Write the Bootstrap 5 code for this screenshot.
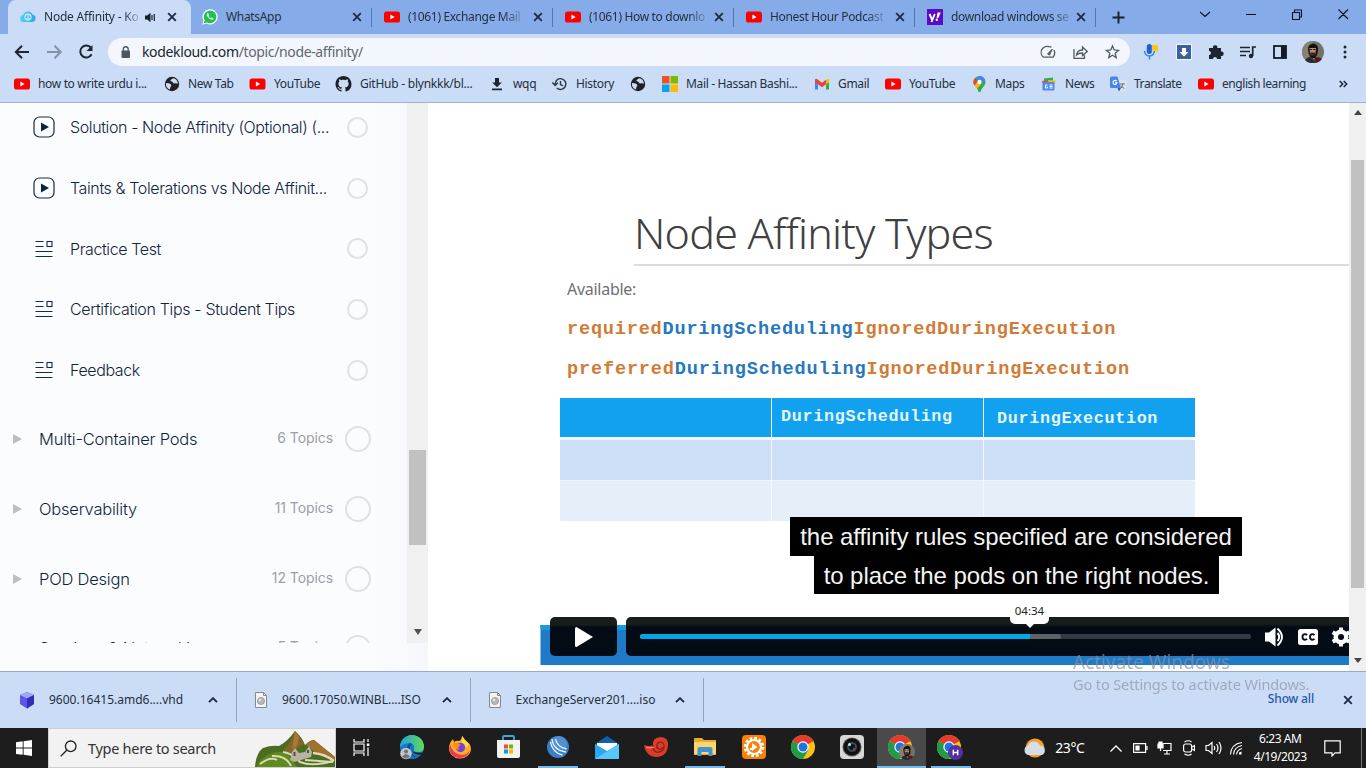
<!DOCTYPE html>
<html lang="en">
<head>
<meta charset="utf-8">
<title>Node Affinity - KodeKloud</title>
<link href="https://cdn.jsdelivr.net/npm/bootstrap@5.3.0/dist/css/bootstrap.min.css" rel="stylesheet">
<style>
body{width:1366px;height:768px;overflow:hidden;font-family:"Noto Sans",sans-serif;font-size:12px;line-height:16px;color:#23303f;background:#fff}
svg{display:block;flex:none}
.ui{white-space:nowrap}
/* browser tabs */
.tabstrip{height:34px;background:#85ace8;letter-spacing:-.33px}
.tabitem{width:181px;height:34px;padding:0 10px 0 12px;position:relative}
.tabitem+.tabitem:after{content:"";position:absolute;right:0;top:8px;width:1px;height:19px;background:#5676a8}
.tabitem.current{width:183px;margin-left:8px;background:#cbdcf6;border-radius:8px 8px 0 0;letter-spacing:-.22px}
.tabtext{overflow:hidden;white-space:nowrap;-webkit-mask-image:linear-gradient(90deg,#000 85%,rgba(0,0,0,.25))}
/* toolbar */
.toolbar{height:36px;background:#cbdcf6}
.navbtns{width:108px;padding-left:14px}
.omnibox{width:1022px;height:28px;border-radius:14px;background:#f3f7fd;font-size:14px;padding:0 9px 0 13px;color:#5f6670;letter-spacing:-.36px}
.omnibox b{font-weight:400;color:#20262e}
.exts{display:grid;grid-template-columns:34px 32px 32px 32px 32px 34px 30px;justify-items:center;margin-left:4px}
.bookmarks{height:33px;background:#cbdcf6;border-bottom:1px solid #9fb2d3;display:grid;grid-template-columns:150px 85px 86px 154px 62px 78px 33px 152px 71px 87px 69px 69px 88px 141px 20px;padding:0 0 5px 14px;align-items:center;letter-spacing:-.34px}
.bookmarks .tight{letter-spacing:-.24px}
/* course sidebar */
.pagearea{height:568px}
.sidebar{width:428px;background:linear-gradient(90deg,#fbfcfe 375px,#f5f7fb);font-family:Inter,sans-serif;color:#16294a}
.outline{width:407px;height:540px;overflow:hidden}
.lesson{height:60.7px;padding-left:33px;font-size:16px;font-weight:300;color:#122340;letter-spacing:-.39px}
.lesson:first-child{margin-top:-6px}
.lesson .name{width:277px;margin-left:15px}
.ring{width:21px;height:21px;border:2px solid #e0e1e3;border-radius:50%;flex:none}
.ring.big{width:26px;height:26px;margin-left:12px}
.chapter{height:69.7px;padding-left:13px;font-size:16.5px;font-weight:300;width:371px;letter-spacing:-.22px;color:#0e1f3c}
.chapters{margin-top:4px}
.chapter .name{margin-left:17px}
.chapter .topics{font-size:14px;font-weight:400;letter-spacing:-.08px;color:#9c9fa5;margin-top:-2px}
.scroller{background:#f0f0f0}
.side-scroll{width:21px;height:540px}
.side-scroll i{display:block;width:17px;height:95px;background:#c1c1c1;margin:347px auto 0}
.page-scroll{width:17px;height:568px}
.page-scroll i{display:block;width:13px;height:428px;background:#c1c1c1;margin:45px auto 0}
/* slide */
.slide{width:921px;padding-left:112px;color:#404040}
.slide h1{font-weight:300;font-size:43px;line-height:50px;letter-spacing:-.77px;margin:105px 0 0 94px;padding-bottom:6px;border-bottom:2px solid #dcdcdc;height:58px;white-space:nowrap;color:#404040}
.avail{margin:13px 0 0 27px;height:20px;font-size:16px;line-height:20px;letter-spacing:-.28px;color:#707070}
.code{font-family:"Liberation Mono",monospace;font-weight:700;font-size:18.6px;line-height:24px;letter-spacing:.78px;margin:19px 0 0 27px;white-space:nowrap;color:#d07c37}
.code+.code{margin-top:16px;letter-spacing:.82px}
.code span{color:#2878bd}
.grid3{display:grid;grid-template-columns:211px 211px 211px;column-gap:1px;width:635px;margin:16px 0 0 20px;background:#f4f8fd}
.grid3 div{height:40px;background:#cddff6}
.grid3 .hd{height:42px;background:#11a1ee;color:#e5f6ff;font:700 16.8px/38px "Liberation Mono",monospace;letter-spacing:.67px;border-bottom:3px solid #f2f8fe;padding-left:9px;white-space:nowrap}
.grid3 .hd.last{padding-left:13px;line-height:41px}
.grid3 .lt{height:41px;border-top:1px solid #eef5fc;background:#e5effa}
.captions{position:absolute;left:0;top:414px;width:921px;padding-left:255px;font:24px/39px "Liberation Sans",sans-serif;letter-spacing:-.07px;color:#f4f4f4}
.captions div{background:#000;height:38.5px;width:452px;white-space:nowrap;text-align:center}
.captions div+div{width:405px}
.player{position:absolute;left:112px;top:522px;width:809px;height:40px;background:#1f7ac8;border-top:5px solid #1b99df;border-left:1px solid #8cb9e0}
.controls{position:absolute;left:122px;top:514px;width:799px}
.playbtn{width:67px;height:39px;border-radius:5px;background:linear-gradient(#181c1b 8px,#030c15 10px)}
.bar{width:723px;height:39px;border-radius:5px 0 0 5px;background:linear-gradient(#181c1b 7px,#030c15 10px);padding-left:14px;overflow:hidden}
.track{width:611px;height:5px;border-radius:3px;background:#353b44}
.loaded{width:421px;height:5px;border-radius:3px;background:#5d6468}
.played{width:390px;height:5px;border-radius:3px 0 0 3px;background:#00a7e5}
.tip{position:absolute;left:582px;top:498px;width:39px;height:23px;background:#fff;border-radius:5px;text-align:center;color:#222;line-height:20px;font-size:11.5px}
.tip:after{content:"";position:absolute;left:16px;top:23px;border:4px solid transparent;border-top-color:#fff}
.watermark{position:absolute;left:1073px;top:649px;color:#8d9299;opacity:.68;white-space:nowrap}
.watermark .w1{font-size:19px;line-height:26px}
.watermark .w2{font-size:14.500px;line-height:18px;letter-spacing:-.11px}
/* downloads */
.downloads{height:57px;background:#cbdcf6;border-top:1px solid #9ba8bd}
.dl{width:233.500px;height:44px;padding:0 18px;border-right:1px solid #91a4c2}
.dl:first-child{width:237px}
.dl .fname{width:152px;margin-left:15px}
.dl:first-child .fname{margin-left:13px}
.showall{color:#2456b0;font-weight:500;letter-spacing:-.15px;margin-bottom:2px}
/* taskbar */
.taskbar{height:40px;background:#1d1d1d;color:#fff}
.startbtn{width:48px}
.searchbox{width:288px;background:#f2f2f2;border:1px solid #cfcfcf;font-size:14.500px;letter-spacing:-.29px;color:#333;padding-left:11px}
.apps{display:grid;grid-template-columns:repeat(13,49.100px);height:40px;margin-left:1px}
.app{display:flex;align-items:center;justify-content:center;height:40px;border-bottom:2px solid transparent}
.app.run{width:40px;margin:0 4.500px;border-color:#76b9ed}
.app.focus{width:49px;margin:0;background:#4a4a4a;border-color:#76b9ed}
.weather{margin-left:48px;width:81px;font-size:14px;letter-spacing:-.4px}
.tray{display:grid;grid-template-columns:repeat(5,24.200px) 22px;width:143px;justify-items:center}
.clock{width:66px;text-align:center;line-height:18px;font-size:12px;letter-spacing:-.45px}
.endline{width:1px;height:40px;background:#777}
</style>
</head>
<body class="d-flex flex-column position-relative">
<svg width="0" height="0" class="position-absolute">
<defs>
<symbol id="yt" viewBox="0 0 16 16"><rect y="2.5" width="16" height="11" rx="2.6" fill="#f00"/><path d="M6.4 5.6v4.8l4.2-2.4z" fill="#fff"/></symbol>
<symbol id="x" viewBox="0 0 10 10"><path d="M1.200 1.200l7.600 7.600M8.800 1.200L1.200 8.800" stroke="#1d2b3e" stroke-width="1.800"/></symbol>
<symbol id="globe" viewBox="0 0 16 16"><circle cx="8" cy="8" r="7.200" fill="#202124"/><path d="M2 7c3 .3 5 .6 5.300 2.200.2 1.300-1.300 1.400-1 2.800L5.600 13.500C3 12.500 1.500 10 2 7zM9 2.300c-1.300 1.300-2.800 1-2.500 2.500.3 1 2 .6 2.500 1.700.5 1.300 1.500 1 2.500.8 1.100-.2 1.600.7 2.300.7C14 5 12 2.600 9 2.300z" fill="#cbdcf6"/></symbol>
<symbol id="play" viewBox="0 0 22 22"><rect x="1" y="1" width="20" height="20" rx="5.500" fill="none" stroke="#14284a" stroke-width="1.200"/><path d="M8 6.500v9l8-4.500z" fill="#0b2140"/></symbol>
<symbol id="list" viewBox="0 0 22 22"><path d="M2.500 3.500h8M2.500 8.500h8M2.500 13.500h17M2.500 18.500h17" stroke="#14284a" stroke-width="1.100"/><rect x="14" y="3.500" width="5" height="5" fill="none" stroke="#14284a" stroke-width="1.100"/></symbol>
<symbol id="up" viewBox="0 0 10 6"><path d="M1 5.200l4-4 4 4" fill="none" stroke="#1f2a3a" stroke-width="1.900"/></symbol>
<symbol id="disc" viewBox="0 0 12 16"><path d="M.5.500h8l3 3v12h-11z" fill="#f4f4f4" stroke="#85888d"/><path d="M8.500.5v3h3" fill="none" stroke="#85888d"/><circle cx="6" cy="9" r="3.600" fill="#b5b7ba" stroke="#909397" stroke-width=".7"/><circle cx="5" cy="8" r="1.300" fill="#e4e4e4"/></symbol>
<symbol id="chrome" viewBox="0 0 24 24"><circle cx="12" cy="12" r="12" fill="#fbc116"/><path d="M12 12L1.600 6A12 12 0 0 1 22.400 6z" fill="#e33b2e"/><path d="M12 12L1.600 6A12 12 0 0 0 12 24l5.200-9z" fill="#229a4c"/><path d="M12 6.500h10.700L22.400 6H12z" fill="#e33b2e"/><circle cx="12" cy="12" r="5.700" fill="#fff"/><circle cx="12" cy="12" r="4.500" fill="#1f74e4"/></symbol>
<symbol id="man" viewBox="0 0 22 22"><circle cx="11" cy="11" r="11" fill="#6f7467"/><path d="M0 11a11 11 0 0 0 11 11V0A11 11 0 0 0 0 11z" fill="#858272"/><path d="M6 7q1-4 5-4.500 4.500.5 5 4.500l-.5 6-2.500 4H8.500L6.500 12z" fill="#17100f"/><path d="M7.500 7h6.500l-.5 6-2.500 2-3-2z" fill="#b98a72"/><path d="M8 11.500h5.500l-1 3.500h-3z" fill="#3a2621"/><path d="M3 19q3-4 7-3l3 5.800Q6 23 3 19z" fill="#292b38"/><path d="M12 21.900l1-6q5 0 7 2-3 3.800-8 4z" fill="#551827"/><path d="M7.500 8.500h2.500M11 8.500h2.500" stroke="#302422"/></symbol>
</defs>
</svg>

<!-- tabs -->
<header class="tabstrip d-flex">
 <div class="tabitem current d-flex align-items-center">
  <svg width="16" height="16" viewBox="0 0 16 16"><defs><linearGradient id="kk"><stop stop-color="#58d0f2"/><stop offset="1" stop-color="#36a3e6"/></linearGradient></defs><path d="M4 13a3.500 3.500 0 0 1-.8-7A5 5 0 0 1 12.500 5.500 3.800 3.800 0 0 1 12 13z" fill="url(#kk)"/><circle cx="8" cy="8" r="3.200" fill="#8fe3f2" stroke="#d8f5fb"/><path d="M7 6.700L5.800 8 7 9.300M9 6.700L10.200 8 9 9.300" fill="none" stroke="#3b9fd0"/></svg>
  <div class="tabtext ms-2">Node Affinity - Ko</div>
  <svg class="ms-auto" width="11" height="11" viewBox="0 0 11 11"><path d="M0 3.500h2.200L5.500.800v9.400L2.200 7.500H0z" fill="#16202e"/><path d="M7 3v5M9.300 2v7" stroke="#16202e" stroke-width="1.200"/></svg>
  <svg class="ms-1 me-1" width="17" height="10" viewBox="0 0 17 10"><use href="#x" x="7" width="10" height="10"/></svg>
 </div>
 <div class="tabitem d-flex align-items-center">
  <svg style="margin-left:-1px" width="16" height="16" viewBox="0 0 16 16"><path d="M.3 15.700l1.200-4A7.600 7.600 0 1 1 4.500 14.600z" fill="#fff"/><path d="M1.800 14.200l.9-3A6.300 6.300 0 1 1 5 13.400z" fill="#23c04f"/><path d="M5.500 4.300c-1.300 1-.7 2.700 1 4.500s3.700 2.700 4.800 1.300l.1-.8-1.700-.9-1 .9C7.500 8.700 6.800 8 6.400 7l.7-.8-.7-1.700z" fill="#fff"/></svg>
  <span class="ms-2 ui">WhatsApp</span><svg class="ms-auto" width="10" height="10"><use href="#x"/></svg>
 </div>
 <div class="tabitem d-flex align-items-center"><svg width="16" height="16"><use href="#yt"/></svg><div class="tabtext ms-2">(1061) Exchange Mail</div><svg class="ms-auto" width="10" height="10"><use href="#x"/></svg></div>
 <div class="tabitem d-flex align-items-center"><svg width="16" height="16"><use href="#yt"/></svg><div class="tabtext ms-2">(1061) How to downlo</div><svg class="ms-auto" width="10" height="10"><use href="#x"/></svg></div>
 <div class="tabitem d-flex align-items-center"><svg width="16" height="16"><use href="#yt"/></svg><div class="tabtext ms-2">Honest Hour Podcast</div><svg class="ms-auto" width="10" height="10"><use href="#x"/></svg></div>
 <div class="tabitem d-flex align-items-center"><svg width="16" height="16" viewBox="0 0 16 16"><rect width="16" height="16" fill="#5b0bc8"/><path d="M2.500 5l2.500 5.500M7.800 5l-3.300 8" stroke="#fff" stroke-width="1.900"/><path d="M10.500 3.500h3.200L11.300 9H9.600z" fill="#fff"/><circle cx="9.800" cy="10.800" r="1.200" fill="#fff"/></svg><div class="tabtext ms-2">download windows se</div><svg class="ms-auto" width="10" height="10"><use href="#x"/></svg></div>
 <svg class="align-self-center ms-3" width="13" height="13" viewBox="0 0 13 13"><path d="M6.500.5v12M.5 6.500h12" stroke="#16202e" stroke-width="1.900"/></svg>
 <svg class="ms-auto" width="166" height="28" viewBox="0 0 166 28" fill="none" stroke="#0c1420" stroke-width="1.100"><path d="M0 12l5 4.500 5-4.500M46 14.500h10M92.500 12.500h7v7h-7zM94.500 12.500v-2.500h7v7h-2M138.500 9.500l9.500 9.500M148 9.500L138.500 19"/></svg>
</header>

<!-- toolbar -->
<div class="toolbar d-flex align-items-center">
 <svg class="navbtns" width="108" height="20" viewBox="0 0 94 20" fill="none" stroke-width="2"><path d="M15 10H2M8 3.800L1.800 10 8 16.200" stroke="#1c2531"/><path d="M33 10h13.500M40.500 3.800l6.200 6.200-6.200 6.200" stroke="#8492a8"/><path d="M77 5.800a6 6 0 1 0 .6 6.500" stroke="#1c2531"/><path d="M78.500 3v6h-6z" fill="#1c2531"/></svg>
 <div class="omnibox d-flex align-items-center">
  <svg width="10" height="12" viewBox="0 0 10 12"><rect x=".5" y="4.500" width="8.500" height="7.500" rx="1" fill="#4d5661"/><path d="M2.300 5V3.200a2.400 2.400 0 0 1 4.900 0V5" fill="none" stroke="#4d5661" stroke-width="1.300"/></svg>
  <span class="ui" style="margin-left:11px"><b>kodekloud.com</b>/topic/node-affinity/</span>
  <svg class="ms-auto" width="82" height="16" viewBox="0 0 82 16" fill="none" stroke="#4f5965" stroke-width="1.300"><path d="M4.500 13.200A6 6 0 0 1 10 2.700q1.500 0 2.500.5M15 6q1.800 4-1 7.200H4.500"/><path d="M8.500 10l4.800-5-2.800 6.200z" fill="#4f5965" stroke-width="1"/><path d="M35 5v9.300h10.500v-3M37.500 11c.5-4 3-5 6-5V3l4.800 4.500-4.800 4V9c-3 0-4.500.5-6 2z"/><path d="M73.500 2l1.700 4 4.300.4-3.300 2.800 1 4.300-3.700-2.300-3.700 2.300 1-4.300-3.300-2.800 4.300-.4z"/></svg>
 </div>
 <div class="exts align-items-center">
  <svg width="16" height="18" viewBox="0 0 16 18"><path d="M8 2h7v7l-3-1.500H9z" fill="#fcc60b"/><rect x="3.800" y="1" width="5" height="10" rx="2.500" fill="#1a62d8"/><path d="M1.500 8q.5 5 5 5t4.800-5M6.500 13v3.500" fill="none" stroke="#3385ee" stroke-width="1.500"/></svg>
  <svg width="16" height="16" viewBox="0 0 16 16"><rect width="16" height="16" fill="#f4f7fc"/><rect x="1" y="1" width="14" height="14" fill="#3d5e9f"/><path d="M6 4h4v4h2.500L8 12.500 3.500 8H6z" fill="#fff"/></svg>
  <svg width="16" height="16" viewBox="0 0 16 16"><path d="M1 4h4a2.200 2.200 0 1 1 4.300 0H13v3.700a2.200 2.200 0 1 1 0 4.300v3H9a2 2 0 0 0-4 0H1v-4a2 2 0 0 0 0-4z" fill="#1c2531"/></svg>
  <svg width="16" height="16" viewBox="0 0 16 16"><path d="M0 3.500h10M0 7.500h10M0 11.500h6" stroke="#1c2531" stroke-width="1.600"/><path d="M12.700 12V3H16" fill="none" stroke="#1c2531" stroke-width="1.700"/><circle cx="11" cy="12" r="2.200" fill="#1c2531"/></svg>
  <svg width="14" height="14" viewBox="0 0 14 14"><rect x="1" y="1" width="12" height="12" fill="none" stroke="#111a26" stroke-width="1.800"/><path d="M8 1h5v12H8z" fill="#111a26"/></svg>
  <svg width="22" height="22"><use href="#man"/></svg>
  <svg width="4" height="14" viewBox="0 0 4 14" fill="#1c2531"><circle cx="2" cy="2" r="1.500"/><circle cx="2" cy="7" r="1.500"/><circle cx="2" cy="12" r="1.500"/></svg>
 </div>
</div>

<!-- bookmarks -->
<nav class="bookmarks ui">
 <div class="d-flex gap-2"><svg width="16" height="16"><use href="#yt"/></svg><span>how to write urdu i...</span></div>
 <div class="d-flex gap-2"><svg width="16" height="16"><use href="#globe"/></svg><span>New Tab</span></div>
 <div class="d-flex gap-2"><svg width="17" height="16"><use href="#yt"/></svg><span>YouTube</span></div>
 <div class="d-flex gap-2 tight"><svg width="17" height="16" viewBox="0 0 16 16"><path fill="#1b1f23" d="M8 0C3.580 0 0 3.580 0 8c0 3.540 2.290 6.530 5.470 7.590.4.070.55-.17.55-.38 0-.19-.01-.82-.01-1.490-2.010.37-2.530-.49-2.690-.94-.09-.23-.48-.94-.82-1.130-.28-.15-.68-.52-.01-.53.63-.01 1.080.58 1.230.82.72 1.210 1.870.87 2.330.66.07-.52.28-.87.51-1.070-1.780-.2-3.640-.89-3.640-3.950 0-.87.31-1.590.82-2.150-.08-.2-.36-1.020.08-2.120 0 0 .67-.21 2.200.82.64-.18 1.320-.27 2-.27s1.360.09 2 .27c1.530-1.040 2.200-.82 2.200-.82.44 1.100.16 1.920.08 2.120.51.56.82 1.270.82 2.150 0 3.070-1.870 3.750-3.650 3.950.29.25.54.73.54 1.480 0 1.070-.01 1.930-.01 2.200 0 .21.15.46.55.38A8.010 8.010 0 0 0 16 8c0-4.420-3.580-8-8-8z"/></svg><span>GitHub - blynkkk/bl...</span></div>
 <div class="d-flex gap-2"><svg width="16" height="16" viewBox="0 0 16 16"><path d="M6 2h4v4.500h2.800L8 11.300 3.200 6.500H6zM3 12.500h10v1.700H3z" fill="#1b2430"/></svg><span>wqq</span></div>
 <div class="d-flex gap-2"><svg width="17" height="16" viewBox="0 0 16 16"><path d="M3.600 8.200A5.400 5.400 0 1 1 5.300 12M.8 6.500l2.900 2.900 2.700-2.700M9 5v3.500l2.700 1.500" fill="none" stroke="#2c3644" stroke-width="1.400"/></svg><span>History</span></div>
 <div class="ms-1"><svg style="margin-left:-3px" width="16" height="16"><use href="#globe"/></svg></div>
 <div class="d-flex gap-2"><svg width="16" height="16" viewBox="0 0 16 16"><path d="M0 0h7.500v7.500H0z" fill="#f25022"/><path d="M8.500 0H16v7.500H8.500z" fill="#7fba00"/><path d="M0 8.500h7.500V16H0z" fill="#00a4ef"/><path d="M8.500 8.500H16V16H8.500z" fill="#ffb900"/></svg><span>Mail - Hassan Bashi...</span></div>
 <div class="d-flex gap-2"><svg width="16" height="16" viewBox="0 0 16 16"><path d="M1 13.500V4.500l3 2.300v6.700z" fill="#4285f4"/><path d="M15 13.500V4.500l-3 2.300v6.700z" fill="#34a853"/><path d="M12 3.800l3-1v3.500l-3 2.200z" fill="#fbbc04"/><path d="M1 3.500Q2 2 4 3.700l4 3 4-3v4.500l-4 3-4-3-3-2z" fill="#ea4335"/></svg><span>Gmail</span></div>
 <div class="d-flex gap-2"><svg width="16" height="16"><use href="#yt"/></svg><span>YouTube</span></div>
 <div class="d-flex gap-2"><svg width="15" height="16" viewBox="0 0 14 16"><path d="M7 0a6 6 0 0 1 6 6c0 4-4 5.500-5 10H6C5.500 11.500 1 10 1 6a6 6 0 0 1 6-6z" fill="#34a853"/><path d="M7 0a6 6 0 0 1 5.600 3.800L7 9 2 3z" fill="#4285f4"/><path d="M2.300 2.200L5.500 5 2 9.500A6 6 0 0 1 2.300 2.200z" fill="#ea4335"/><path d="M2 9.500L5 6l3.500 2.500L4.500 12.500Q2.700 11 2 9.500z" fill="#fbbc04"/><circle cx="7" cy="6" r="2.200" fill="#fff"/></svg><span>Maps</span></div>
 <div class="d-flex gap-2"><svg width="16" height="16" viewBox="0 0 16 16"><path d="M3 2.500l9-1V7H3z" fill="#34a853"/><path d="M.8 5l5-.5L8 8H2z" fill="#ea4335"/><path d="M7 4l7.500.5L14 8H8z" fill="#fbbc04"/><rect x="1.500" y="6" width="12" height="8.500" rx="1" fill="#4e8cf0"/><path d="M6.500 9H4.500v3h2v-1.300M8.500 9h3M8.500 10.500h3M8.500 12h3" stroke="#fff" fill="none"/></svg><span>News</span></div>
 <div class="d-flex gap-2 tight"><svg width="16" height="16" viewBox="0 0 16 16"><path d="M6 4h9a1 1 0 0 1 1 1v9.500a1 1 0 0 1-1 1H9z" fill="#dde2e8"/><path d="M1 .5h6.500L11 12H1a1 1 0 0 1-1-1V1.500z" fill="#4a86ea"/><path d="M7.500 12H11l-2 3.500z" fill="#2a5fc0"/><path d="M6.700 5.300A2 2 0 1 0 7 6.700H5" stroke="#fff" fill="none" stroke-width="1.100"/><path d="M10 8h5M12.500 7v1.500q0 3-2 4M11 9.500q1 2 3.500 3" stroke="#6b7887" fill="none"/></svg><span style="letter-spacing:-.45px">Translate</span></div>
 <div class="d-flex gap-2"><svg width="16" height="16"><use href="#yt"/></svg><span style="letter-spacing:-.43px">english learning</span></div>
 <svg width="9" height="8" viewBox="0 0 9 8" fill="none" stroke="#1c2531" stroke-width="1.500"><path d="M.7 1l3 3-3 3M4.700 1l3 3-3 3"/></svg>
</nav>

<!-- page -->
<main class="pagearea d-flex">
 <aside class="sidebar d-flex">
  <div class="outline">
   <div class="lesson d-flex align-items-center"><svg width="22" height="22"><use href="#play"/></svg><div class="name ui">Solution - Node Affinity (Optional) (...</div><span class="ring"></span></div>
   <div class="lesson d-flex align-items-center"><svg width="22" height="22"><use href="#play"/></svg><div class="name ui">Taints &amp; Tolerations vs Node Affinit...</div><span class="ring"></span></div>
   <div class="lesson d-flex align-items-center"><svg width="22" height="22"><use href="#list"/></svg><div class="name ui">Practice Test</div><span class="ring"></span></div>
   <div class="lesson d-flex align-items-center"><svg width="22" height="22"><use href="#list"/></svg><div class="name ui" style="letter-spacing:-.34px">Certification Tips - Student Tips</div><span class="ring"></span></div>
   <div class="lesson d-flex align-items-center"><svg width="22" height="22"><use href="#list"/></svg><div class="name ui">Feedback</div><span class="ring"></span></div>
   <div class="chapters">
    <div class="chapter d-flex align-items-center"><svg width="9" height="10"><path d="M0 0l9 5-9 5z" fill="#bcbec1"/></svg><span class="name">Multi-Container Pods</span><span class="topics ms-auto">6 Topics</span><span class="ring big"></span></div>
    <div class="chapter d-flex align-items-center"><svg width="9" height="10"><path d="M0 0l9 5-9 5z" fill="#bcbec1"/></svg><span class="name">Observability</span><span class="topics ms-auto">11 Topics</span><span class="ring big"></span></div>
    <div class="chapter d-flex align-items-center"><svg width="9" height="10"><path d="M0 0l9 5-9 5z" fill="#bcbec1"/></svg><span class="name">POD Design</span><span class="topics ms-auto">12 Topics</span><span class="ring big"></span></div>
    <div class="chapter d-flex align-items-center"><svg width="9" height="10"><path d="M0 0l9 5-9 5z" fill="#bcbec1"/></svg><span class="name">Services &amp; Networking</span><span class="topics ms-auto">5 Topics</span><span class="ring big"></span></div>
   </div>
  </div>
  <div class="scroller side-scroll"><i></i><svg class="mx-auto" style="margin-top:84px" width="8" height="6"><path d="M0 0h8L4 6z" fill="#505050"/></svg></div>
 </aside>
 <section class="slide position-relative">
  <h1>Node Affinity Types</h1>
  <div class="avail">Available:</div>
  <div class="code">required<span>DuringScheduling</span>IgnoredDuringExecution</div>
  <div class="code">preferred<span>DuringScheduling</span>IgnoredDuringExecution</div>
  <div class="grid3">
   <div class="hd"></div><div class="hd">DuringScheduling</div><div class="hd last">DuringExecution</div>
   <div></div><div></div><div></div>
   <div class="lt"></div><div class="lt"></div><div class="lt"></div>
  </div>
  <div class="captions d-flex flex-column"><div style="margin-left:107px">the affinity rules specified are considered</div><div style="margin-left:131px">to place the pods on the right nodes.</div></div>
  <div class="player"></div>
  <div class="controls d-flex justify-content-between">
   <div class="playbtn d-flex align-items-center justify-content-center"><svg width="18" height="20"><path d="M1.500 0L18 10 1.500 20Q0 20 0 18.500V1.500Q0 0 1.500 0z" fill="#fff"/></svg></div>
   <div class="bar d-flex align-items-center">
    <div class="track flex-shrink-0"><div class="loaded"><div class="played"></div></div></div>
    <svg style="margin-left:14px" width="86" height="22" viewBox="0 0 86 22"><path d="M0 6.500h4l6.500-5v19l-6.500-5H0z" fill="#fff"/><path d="M12.500 7q3.500 4 0 8M12.500 2.500q9 8.500 0 17" fill="none" stroke="#fff" stroke-width="1.900"/><rect x="33" y="3" width="20" height="16" rx="2.500" fill="#fff"/><path d="M42 9.200q-1-1.200-2.700-1-1.800.3-1.800 2.800t2 2.700q1.600.2 2.500-1M49.500 9.200q-1-1.200-2.700-1-1.800.3-1.800 2.800t2 2.700q1.600.2 2.500-1" fill="none" stroke="#0a1119" stroke-width="1.900"/><g transform="translate(76 11)"><circle r="5.300" fill="none" stroke="#fff" stroke-width="4.500"/><path d="M0-9.500V9.500M-8.300-4.800L8.300 4.800M-8.300 4.800L8.300-4.800" stroke="#fff" stroke-width="4"/><circle r="3" fill="#030c15"/></g></svg>
   </div>
  </div>
  <div class="tip">04:34</div>
 </section>
 <div class="scroller page-scroll"><svg class="mx-auto" style="margin-top:7px;margin-bottom:7px" width="8" height="5"><path d="M0 5h8L4 0z" fill="#444"/></svg><i></i><svg class="mx-auto" style="margin-top:70px" width="8" height="5"><path d="M0 0h8L4 5z" fill="#444"/></svg></div>
</main>

<!-- downloads -->
<footer class="downloads d-flex align-items-center ui">
 <div class="dl d-flex align-items-center"><svg width="18" height="17" viewBox="0 0 17 17"><path d="M8.500 0l7 3v9l-7 4.500-7-4.500V3z" fill="#5b55ea"/><path d="M8.500 0l7 3-7 3.500-7-3.500z" fill="#9da7f8"/><path d="M8.500 6.500l7-3.500v9l-7 4.500z" fill="#332fb4"/></svg><div class="fname">9600.16415.amd6....vhd</div><svg width="10" height="6" class="ms-auto"><use href="#up"/></svg></div>
 <div class="dl d-flex align-items-center"><svg width="12" height="16"><use href="#disc"/></svg><div class="fname">9600.17050.WINBL....ISO</div><svg width="10" height="6" class="ms-auto"><use href="#up"/></svg></div>
 <div class="dl d-flex align-items-center"><svg width="12" height="16"><use href="#disc"/></svg><div class="fname">ExchangeServer201....iso</div><svg width="10" height="6" class="ms-auto"><use href="#up"/></svg></div>
 <span class="ms-auto showall">Show all</span>
 <svg style="margin:0 13px 0 29px" width="10" height="10"><use href="#x"/></svg>
</footer>

<!-- taskbar -->
<footer class="taskbar d-flex align-items-center ui">
 <div class="startbtn d-flex justify-content-center"><svg width="16" height="16" viewBox="0 0 16 16" fill="#fff"><path d="M0 2.200L6.700 1.300v6.300H0zM7.600 1.200L16 0v7.600H7.600zM0 8.500h6.700v6.300L0 13.900zM7.600 8.500H16V16l-8.400-1.200z"/></svg></div>
 <div class="searchbox d-flex align-items-center h-100">
  <svg width="17" height="17" viewBox="0 0 17 17" fill="none" stroke="#222" stroke-width="1.300"><circle cx="10.700" cy="6.300" r="5.300"/><path d="M7 10L.7 16.300"/></svg>
  <span style="margin-left:11px">Type here to search</span>
  <svg class="ms-auto align-self-end" width="80" height="36" viewBox="0 0 80 36"><path d="M0 36q1-14 8-19 8-3 16-2Q33 10 40 0q7 6 10 14 5-5 9-5l21 17v10z" fill="#4c6d1f"/><path d="M28 20Q36 12 40 0q6 6 9 13l-5 3-8 6z" fill="#84652a"/><path d="M40 0l4 6-2 9-5 3z" fill="#a87a35"/><path d="M51 14q4-5 8-5l21 17v3L60 21z" fill="#a1712f"/><path d="M4 31q12-13 28-9l10 14H2z" fill="#5f8a22"/><path d="M5 33q10-8 17-4M17 25q14-1 19 10M28 21q9 1 17 10 12 5 33-1M50 29l28 2" fill="none" stroke="#d8dab2" stroke-width="2"/><path d="M35 29l2-8 3-4 4 5 6-1 4-6 3 6-1 5-17 5z" fill="#b9b2a0"/><path d="M39.500 25v-4M53 22v-3" stroke="#4b463e" stroke-width="1.800"/><path d="M58 22q12 1 21 8" stroke="#e2d9b6" stroke-width="2.500" fill="none"/></svg>
 </div>
 <div class="apps">
  <div class="app"><svg width="17" height="17" viewBox="0 0 17 17" fill="none" stroke="#fff" stroke-width="1.200"><path d="M1 0v3h10V0M1 17v-3h10v3M1 5h10v7H1zM15 0v3M15 8.500V17"/><rect x="13.800" y="4.500" width="2.500" height="2.500" fill="#fff" stroke="none"/></svg></div>
  <div class="app"><svg width="26" height="25" viewBox="0 0 26 25"><defs><linearGradient id="ed" x1="0" x2="1"><stop stop-color="#1fa5dc"/><stop offset="1" stop-color="#62d957"/></linearGradient></defs><circle cx="14" cy="12" r="12" fill="#1579c8"/><path d="M2 12A12 12 0 0 1 26 12q0 5-6 5-5 0-4-3 1-5-4-6-6 0-10 4z" fill="url(#ed)"/><path d="M12 8q-5 4-2 10 4 6 13 3-5 2-8-1-6-5-1-11z" fill="#0b4d98"/><path d="M13 14q2 5 12 3.500l-1 2q-9 1-11-5.500z" fill="#1d1d1d"/><circle cx="8" cy="18.500" r="5.800" fill="#c3c7ca"/><circle cx="8" cy="16.500" r="2.100" fill="#73777b"/><path d="M4 21.500q4-5 8 0-4 4-8 0z" fill="#73777b"/></svg></div>
  <div class="app"><svg width="24" height="24" viewBox="0 0 24 24"><path d="M14 1q2 2 2 4 7 3 7 9A11 10 0 0 1 1 13q0-5 4-9l1 3q2-2 5-1 3-1 3-5z" fill="#ffb02a"/><path d="M2 9q-3 12 9 14 9 0 11-8-3 5-8 5Q4 19 2 9z" fill="#ee355c"/><path d="M14 1q3 4 7 8-3 6-8 3z" fill="#ffdb43"/><circle cx="12.500" cy="12.500" r="4.700" fill="#7542d5"/><path d="M5 8q4-1 8 2-4 1-2 5-6-1-6-7z" fill="#ff8b25"/></svg></div>
  <div class="app"><svg width="23" height="24" viewBox="0 0 23 24"><path d="M6 6V2.200Q6 1 7.200 1h8.600Q17 1 17 2.200V6" fill="none" stroke="#36aadd" stroke-width="1.800"/><path d="M0 5h23v16q0 2-2 2H2q-2 0-2-2z" fill="#f2f2f2"/><path d="M7 9.500h4v4H7z" fill="#f05022"/><path d="M12 9.500h4v4h-4z" fill="#78b500"/><path d="M7 14.500h4v4H7z" fill="#00a0e6"/><path d="M12 14.500h4v4h-4z" fill="#f9b700"/></svg></div>
  <div class="app run"><svg width="22" height="22" viewBox="0 0 22 22"><circle cx="11" cy="11" r="11" fill="#3d7fc7"/><circle cx="12" cy="8" r="8" fill="#69a1df" opacity=".5"/><path d="M5 3q1 11 14 13M8.500 3Q10 11 19.500 13M3.500 6q2 11 12 13" fill="none" stroke="#edf6ff" stroke-width="1.300"/></svg></div>
  <div class="app"><svg width="24" height="23" viewBox="0 0 24 23"><path d="M0 8l12-8 12 8v15H0z" fill="#0c61aa"/><path d="M2 7h20v9H2z" fill="#fff"/><path d="M0 8l12 7 12-7v15H0z" fill="#29a9ed"/><path d="M0 23l24-15v15z" fill="#56c9fa"/></svg></div>
  <div class="app"><svg width="24" height="22" viewBox="0 0 24 22"><path d="M0 9q5 2 9 0-1-7 7-8 8 0 8 7 0 12-11 13Q2 21 0 9z" fill="#d93d2a"/><path d="M19 11q-2 4-6 1-1-5 3-6 5 0 4 6-2 5-8 4-4-2-3-7" fill="none" stroke="#812016" stroke-width="1.200"/><path d="M2 11q4 2 8 0" stroke="#f49a7d" fill="none"/></svg></div>
  <div class="app run"><svg width="22" height="20" viewBox="0 0 22 20"><path d="M0 2q0-1 1-1h7l2 2h12v15H0z" fill="#e8ac34"/><path d="M0 5h22v12H0z" fill="#ffd668"/><path d="M3.500 19v-7q0-2 2-2h11q2 0 2 2v7h-4v-4h-7v4z" fill="#4093d5"/></svg></div>
  <div class="app"><svg width="24" height="24" viewBox="0 0 24 24"><rect width="24" height="24" rx="4" fill="#f78109"/><circle cx="12" cy="12" r="9" fill="none" stroke="#fff" stroke-width="2.500" stroke-dasharray="2.700 2.012"/><circle cx="12" cy="12" r="7" fill="none" stroke="#fff" stroke-width="2.200"/><path d="M10 8v8l5.500-4z" fill="#fff"/><circle cx="9" cy="14" r="1.300" fill="#fff"/></svg></div>
  <div class="app"><svg width="24" height="24"><use href="#chrome"/></svg></div>
  <div class="app"><svg width="24" height="24" viewBox="0 0 24 24"><rect width="24" height="24" rx="4" fill="#d7d7d7"/><circle cx="12" cy="12" r="9.500" fill="#555"/><circle cx="12" cy="12" r="8.500" fill="#111"/><circle cx="12" cy="12" r="5" fill="#315057"/><circle cx="12" cy="12" r="3" fill="#0d1418"/><circle cx="9.500" cy="9.500" r="1.500" fill="#c8e4e8"/><circle cx="14" cy="14" r="1.200" fill="#a33"/></svg></div>
  <div class="app focus"><svg width="27" height="25" viewBox="0 0 27 25"><use href="#chrome" width="24" height="24"/><use href="#man" x="11" y="9" width="16" height="16"/></svg></div>
  <div class="app run"><svg width="27" height="25" viewBox="0 0 27 25"><use href="#chrome" width="24" height="24"/><circle cx="18.500" cy="17.500" r="7.500" fill="#5230a5"/><path d="M16.300 14.800v5.400M20.700 14.800v5.400M16.300 17.500h4.400" stroke="#fff" stroke-width="1.400"/></svg></div>
 </div>
 <div class="weather d-flex align-items-center"><svg width="24" height="21" viewBox="0 0 24 21"><circle cx="12" cy="10" r="9.500" fill="#f5a328"/><path d="M5 17a5 5 0 0 1 0-9.500A6.500 6.500 0 0 1 17 7.500 5 5 0 0 1 19 17z" fill="#d7dde8"/></svg><span class="ms-2">23°C</span></div>
 <div class="tray align-items-center">
  <svg width="12" height="7" fill="none" stroke="#fff" stroke-width="1.300"><path d="M.5 6.500L6 1l5.500 5.500"/></svg>
  <svg width="15" height="10" fill="none" stroke="#fff" stroke-width="1.200"><path d="M.6.600h12v8.800H.6zM14 3v4"/><path d="M3 3h3v4H3z" fill="#fff"/></svg>
  <svg width="15" height="14" fill="none" stroke="#fff" stroke-width="1.200"><path d="M6 2.500h8v7H6M10 9.500v3.500M7 13h6"/><path d="M1 3h5v4H1zM2 3V1h3v2M3.500 7v3" fill="#fff"/></svg>
  <svg width="12" height="16" fill="none" stroke="#fff" stroke-width="1.200"><rect x=".6" y="4" width="8" height="8" rx="2"/><path d="M9 7l2.500-1.500v5L9 9M1.500 2q4-2.500 7 0M1.500 14q4 2.500 7 0"/></svg>
  <svg width="17" height="14" fill="none" stroke="#fff" stroke-width="1.200"><path d="M1 4.500h2.500L7 1.500v11l-3.500-3H1zM9 5q1.500 2 0 4M11.500 3q3 4 0 8M14 1q4 6 0 12"/></svg>
  <svg width="14" height="14" fill="none" stroke="#fff" stroke-width="1.100"><path d="M1.500 13.500Q2 3 13 1.500M4.500 13.500Q5 6 13 4.500M7.500 13.500Q8 9 13 7.500"/><path d="M10 13.500v-2l2.500-1v3z" fill="#fff" stroke="none"/></svg>
 </div>
 <div class="clock">6:23 AM<br>4/19/2023</div>
 <svg style="margin-left:11px" width="17" height="17" viewBox="0 0 17 17" fill="none" stroke="#fff" stroke-width="1.200"><path d="M.8.800h15.400v12H11L8 16v-3.200H.8z"/></svg>
 <div class="endline ms-auto me-1"></div>
</footer>

<div class="watermark"><div class="w1">Activate Windows</div><div class="w2">Go to Settings to activate Windows.</div></div>
<script src="https://cdn.jsdelivr.net/npm/bootstrap@5.3.0/dist/js/bootstrap.bundle.min.js"></script>
</body>
</html>
